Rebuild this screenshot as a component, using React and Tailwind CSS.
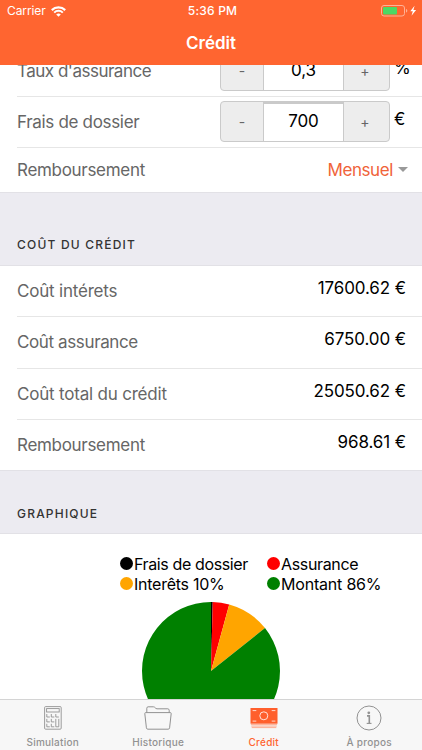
import { useState } from 'react';

const costs = [
  { label: 'Coût intérets', value: '17600.62 €', labelClass: 'tracking-[-0.2px]' },
  { label: 'Coût assurance', value: '6750.00 €', labelClass: 'tracking-[-0.38px]' },
  { label: 'Coût total du crédit', value: '25050.62 €', labelClass: 'tracking-[-0.2px]' },
  { label: 'Remboursement', value: '968.61 €', labelClass: 'tracking-[-0.3px]' },
];

const legend = [
  { label: 'Frais de dossier', color: 'bg-black', labelClass: 'tracking-[-0.38px]' },
  { label: 'Assurance', color: 'bg-[#ff0000]', labelClass: 'tracking-[-0.35px]' },
  { label: 'Interêts 10%', color: 'bg-[#ffa500]', labelClass: 'tracking-[-0.25px]' },
  { label: 'Montant 86%', color: 'bg-[#008000]', labelClass: 'tracking-[-0.2px]' },
];

const slices = [
  { value: 700, color: '#000000' },
  { value: 6750, color: '#ff0000' },
  { value: 17600.62, color: '#ffa500' },
  { value: 150000, color: '#008000' },
];

const WifiIcon = () => (
  <svg className="w-[15px] h-[11px]" viewBox="0 0 15 11" fill="none" stroke="#fff">
    <path d="M0.8 4.1a9.6 9.6 0 0 1 13.4 0" strokeWidth="2.2" />
    <path d="M3.2 6.6a6.1 6.1 0 0 1 8.6 0" strokeWidth="2" />
    <path d="M7.5 10.8L5.2 8.5a3.3 3.3 0 0 1 4.6 0z" fill="#fff" stroke="none" />
  </svg>
);

const BatteryIcon = () => (
  <svg className="w-[37px] h-[12px]" viewBox="0 0 37 12">
    <rect x="0.5" y="0.5" width="23" height="10.5" rx="2.5" fill="none" stroke="#ffb296" />
    <path d="M25 4v3.6c1-.3 1.3-1 1.3-1.8S26 4.3 25 4z" fill="#ffb296" />
    <rect x="2" y="2" width="14" height="7.5" rx="1" fill="#4cd964" />
    <path d="M33.6 0.8L29.3 6.3h2.5l-1.3 4.4 4.6-5.700h-2.7z" fill="#fff" />
  </svg>
);

const CalculatorIcon = () => (
  <svg className="w-[18px] h-[24px]" viewBox="0 0 18 24" fill="none" stroke="#929292" strokeWidth="0.9">
    <rect x="0.6" y="0.6" width="16.6" height="22.6" rx="1" />
    <rect x="2.6" y="2.6" width="12.6" height="3.4" />
    <path d="M2.8 8v3h3M7.300 8v3h3M11.8 8v3h3M2.8 12.9v3h3M7.3 12.9v3h3M2.8 17.8v3h3M7.3 17.8v3h3M11.8 12.9v7.9h3v-7.9" />
  </svg>
);

const FolderIcon = () => (
  <svg className="w-[28px] h-[24px]" viewBox="0 0 28 24" fill="none" stroke="#929292" strokeWidth="1">
    <path d="M2.8 6.6V2.2c0-.8.5-1.4 1.3-1.4h5.3c1.8 0 1.8 2 3.6 2h10.800c.8 0 1.4.6 1.4 1.4v2.4" />
    <path d="M1.7 6.6h24.6c.7 0 1 .4.9 1l-1.6 14.2c-.1.9-.6 1.4-1.4 1.4H3.8c-.8 0-1.3-.5-1.4-1.4L.8 7.600c-.1-.6.2-1 .9-1z" />
  </svg>
);

const CashIcon = () => (
  <svg className="w-[28px] h-[21px]" viewBox="0 0 28 21" fill="none">
    <rect x="0.5" y="0" width="27" height="15.7" fill="#ff5f2c" />
    <path d="M0.9 16.6h26.2M1.3 18.1h25.4M1.7 19.6h24.6" stroke="#ff9a78" strokeWidth="0.8" />
    <circle cx="13.8" cy="7.8" r="4" stroke="#ffe3d9" strokeWidth="1" />
    <path d="M2.6 2.6h3.7M2.6 13.1h3.7M21.7 2.6h3.7M21.7 13.1h3.7" stroke="#ffd9cb" strokeWidth="1" />
  </svg>
);

const InfoIcon = () => (
  <svg className="w-[26px] h-[26px]" viewBox="0 0 26 26" fill="none" stroke="#929292">
    <circle cx="13" cy="13" r="12" strokeWidth="1" />
    <circle cx="12.8" cy="7.8" r="1.4" fill="#929292" stroke="none" />
    <path d="M11 10.9h2.3v7.3" strokeWidth="1.6" />
    <path d="M10.700 18.4h4.8" strokeWidth="1.1" />
  </svg>
);

const tabs = [
  { id: 'simulation', label: 'Simulation', icon: CalculatorIcon },
  { id: 'historique', label: 'Historique', icon: FolderIcon },
  { id: 'credit', label: 'Crédit', icon: CashIcon },
  { id: 'about', label: 'À propos', icon: InfoIcon },
];

const Stepper = ({ value, unit }) => (
  <div className="flex items-start">
    <div className="flex h-[41px] w-[170px] rounded-[4px] border border-[#cacaca] bg-[#ededed] overflow-hidden text-[#666]">
      <button className="w-[42px] text-[14px]">-</button>
      <div className="flex-1 border-x border-t-2 border-[#cacaca] bg-white text-center text-[17px] leading-[35px] tracking-[-0.1px] text-black">
        {value}
      </div>
      <button className="w-[45px] pr-[3px] text-[14px]">+</button>
    </div>
    <span className="w-[32px] pl-[4px] pt-[7px] text-[17px] leading-[22px] tracking-[-0.5px] text-black">{unit}</span>
  </div>
);

const SectionTitle = ({ children, className }) => (
  <div className={`flex items-end border-y border-[#e2e1e6] bg-[#ecebf1] pl-[17px] text-[12px] font-medium leading-[16px] text-[#333] ${className}`}>
    {children}
  </div>
);

const PieChart = () => {
  const total = slices.reduce((sum, s) => sum + s.value, 0);
  const point = (ratio) => {
    const angle = ratio * 2 * Math.PI;
    return `${69 + 69 * Math.sin(angle)} ${69 - 69 * Math.cos(angle)}`;
  };
  let start = 0;

  return (
    <svg className="w-[138px] h-[138px] shrink-0" viewBox="0 0 138 138">
      {slices.map((s) => {
        const end = start + s.value / total;
        const large = end - start > 0.5 ? 1 : 0;
        const d = `M69 69L${point(start)}A69 69 0 ${large} 1 ${point(end)}Z`;
        start = end;
        return <path key={s.color} d={d} fill={s.color} />;
      })}
    </svg>
  );
};

const App = () => {
  const [active, setActive] = useState('credit');

  return (
    <div className="flex h-[750px] w-[422px] flex-col overflow-hidden bg-white font-['Inter','Liberation_Sans',sans-serif]">
      {/* Header */}
      <header className="h-[65px] shrink-0 bg-[#ff6530] text-white">
        <div className="grid h-[22px] grid-cols-3 items-center pl-[7px] pr-[4px] text-[12px]">
          <div className="flex items-center gap-[5px]">
            <span className="tracking-[-0.1px]">Carrier</span>
            <WifiIcon />
          </div>
          <span className="text-center font-medium tracking-[0.2px]">5:36 PM</span>
          <div className="flex justify-end">
            <BatteryIcon />
          </div>
        </div>
        <h1 className="text-center text-[17px] font-semibold leading-[42px]">Crédit</h1>
      </header>

      {/* Content */}
      <main className="flex min-h-0 flex-1 flex-col overflow-hidden text-[17px] text-[#666]">
        <div className="-mt-[20px] ml-[17px] flex h-[52px] shrink-0 justify-between border-b border-[#e6e6e6] pt-[5px]">
          <span className="leading-[42px] tracking-[-0.5px]">Taux d'assurance</span>
          <Stepper value="0,3" unit="%" />
        </div>
        <div className="ml-[17px] flex h-[51px] shrink-0 justify-between border-b border-[#e6e6e6] pt-[4px]">
          <span className="leading-[42px] tracking-[-0.32px]">Frais de dossier</span>
          <Stepper value="700" unit="€" />
        </div>
        <div className="ml-[17px] flex h-[44px] shrink-0 items-center justify-between pr-[14px] pt-[2px]">
          <span className="tracking-[-0.3px]">Remboursement</span>
          <div className="flex items-center gap-[5px] tracking-[-0.4px] text-[#f06339]">
            Mensuel
            <svg className="mb-[4px] h-[5px] w-[10px]" viewBox="0 0 10 5">
              <path d="M0 0h10L5 5z" fill="#999" />
            </svg>
          </div>
        </div>

        <SectionTitle className="h-[74px] shrink-0 pb-[12px] tracking-[1.2px]">COÛT DU CRÉDIT</SectionTitle>
        <div className="shrink-0 pl-[17px]">
          {costs.map((c) => (
            <div key={c.label} className="flex h-[51.25px] justify-between border-b border-[#e6e6e6] pr-[16px] last:h-[50px] last:border-b-0">
              <span className={`leading-[51px] ${c.labelClass}`}>{c.label}</span>
              <span className="leading-[45px] tracking-[-0.1px] text-black">{c.value}</span>
            </div>
          ))}
        </div>

        <SectionTitle className="h-[64px] shrink-0 pb-[11px] tracking-[1.2px]">GRAPHIQUE</SectionTitle>
        <div className="flex shrink-0 flex-col items-center pt-[20px]">
          <div className="ml-[93px] grid grid-cols-[147px_128px] text-[16px] leading-[20px] text-black">
            {legend.map((l) => (
              <div key={l.label} className={`flex items-center gap-[1px] whitespace-nowrap ${l.labelClass}`}>
                <span className={`h-[13px] w-[13px] rounded-full ${l.color}`} />
                {l.label}
              </div>
            ))}
          </div>
          <div className="pt-[8px]">
            <PieChart />
          </div>
        </div>
      </main>

      {/* Tab bar */}
      <nav className="grid h-[51px] shrink-0 grid-cols-4 border-t border-[#d4d4d4] bg-[#f7f7f7]">
        {tabs.map(({ id, label, icon: Icon }) => (
          <button
            key={id}
            onClick={() => setActive(id)}
            className={`flex flex-col items-center text-[10px] font-medium leading-[12px] tracking-[0.25px] ${active === id ? 'text-[#ff6530]' : 'text-[#929292]'}`}
          >
            <span className="flex h-[36px] items-center justify-center">
              <Icon />
            </span>
            {label}
          </button>
        ))}
      </nav>
    </div>
  );
};

export default App;
